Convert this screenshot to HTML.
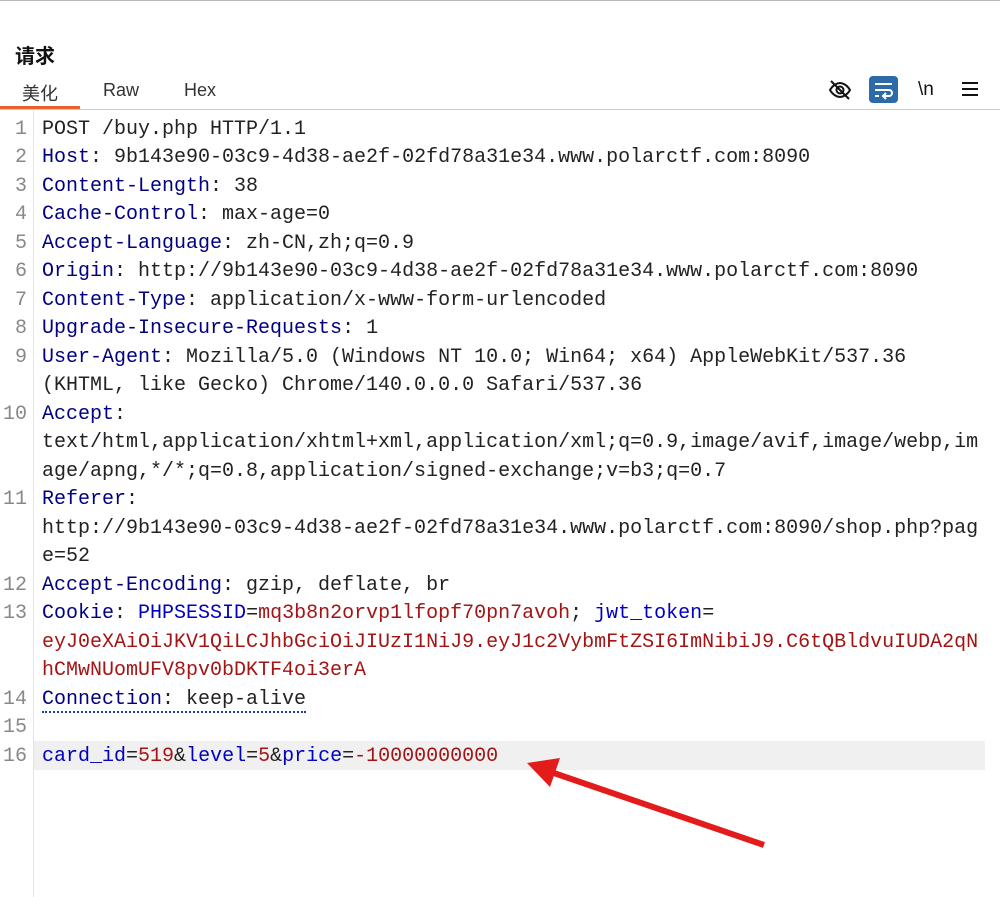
<!DOCTYPE html>
<html><head><meta charset="utf-8">
<style>
html,body{margin:0;padding:0;background:#fff;width:1000px;height:897px;overflow:hidden;position:relative;font-family:"Liberation Sans","Noto Sans CJK SC",sans-serif}
.topline{position:absolute;left:0;top:0;width:1000px;height:1px;background:#bdb6b6}
.title{position:absolute;left:15px;top:40px;font-size:20px;font-weight:bold;color:#111}
.tab{position:absolute;top:80px;font-size:18px;color:#333}
.ul{position:absolute;left:0;top:106px;width:80px;height:3px;background:#e8602c}
.sep{position:absolute;left:0;top:109px;width:1000px;height:1px;background:#ccd0d0}
.gut{position:absolute;left:33px;top:110px;width:1px;height:787px;background:#e4e4e4}
.hl{position:absolute;left:34px;top:741px;width:951px;height:29px;background:#f0f0f0}
.row{position:absolute;left:42px;height:28.5px;line-height:28.5px;font-family:"Liberation Mono","Noto Sans CJK SC",monospace;font-size:20px;color:#222;white-space:pre}
.n{position:absolute;left:0;width:27px;text-align:right;height:28.5px;line-height:28.5px;font-family:"Liberation Mono",monospace;font-size:20px;color:#888}
.k{color:#000080}.b{color:#0000c0}.r{color:#a31515}
.dot{border-bottom:2px dotted #1a3fb5}
</style></head><body>
<div class="topline"></div>
<div class="title">请求</div>
<div class="tab" style="left:22px">美化</div>
<div class="tab" style="left:103px">Raw</div>
<div class="tab" style="left:184px">Hex</div>
<div class="ul"></div><div class="sep"></div><div class="gut"></div><div class="hl"></div>

<svg style="position:absolute;left:828px;top:78px" width="24" height="24" viewBox="0 0 24 24" fill="none" stroke="#111" stroke-width="2"><path d="M2 12c3-5 7-7 10-7s7 2 10 7c-3 5-7 7-10 7s-7-2-10-7z"/><circle cx="12" cy="12" r="3.5"/><path d="M3 3l18 18"/></svg>
<div style="position:absolute;left:869px;top:76px;width:29px;height:27px;border-radius:4px;background:#2d6aa8"></div>
<svg style="position:absolute;left:869px;top:76px" width="29" height="27" viewBox="0 0 29 27" fill="none" stroke="#fff" stroke-width="2"><path d="M6 8h17M6 14h14a3 3 0 0 1 0 6h-5M17 17l-3 3 3 3M6 20h4"/></svg>
<div style="position:absolute;left:918px;top:79px;font-size:19px;color:#111">\n</div>
<svg style="position:absolute;left:962px;top:82px" width="16" height="14" viewBox="0 0 16 14" stroke="#111" stroke-width="2"><path d="M0 1h16M0 7h16M0 13h16"/></svg>

<div id="c"></div>
<script>
var R=[
[1,'POST /buy.php HTTP/1.1'],
[2,'<span class="k">Host</span>: 9b143e90-03c9-4d38-ae2f-02fd78a31e34.www.polarctf.com:8090'],
[3,'<span class="k">Content-Length</span>: 38'],
[4,'<span class="k">Cache-Control</span>: max-age=0'],
[5,'<span class="k">Accept-Language</span>: zh-CN,zh;q=0.9'],
[6,'<span class="k">Origin</span>: http://9b143e90-03c9-4d38-ae2f-02fd78a31e34.www.polarctf.com:8090'],
[7,'<span class="k">Content-Type</span>: application/x-www-form-urlencoded'],
[8,'<span class="k">Upgrade-Insecure-Requests</span>: 1'],
[9,'<span class="k">User-Agent</span>: Mozilla/5.0 (Windows NT 10.0; Win64; x64) AppleWebKit/537.36'],
[0,'(KHTML, like Gecko) Chrome/140.0.0.0 Safari/537.36'],
[10,'<span class="k">Accept</span>:'],
[0,'text/html,application/xhtml+xml,application/xml;q=0.9,image/avif,image/webp,im'],
[0,'age/apng,*/*;q=0.8,application/signed-exchange;v=b3;q=0.7'],
[11,'<span class="k">Referer</span>:'],
[0,'http://9b143e90-03c9-4d38-ae2f-02fd78a31e34.www.polarctf.com:8090/shop.php?pag'],
[0,'e=52'],
[12,'<span class="k">Accept-Encoding</span>: gzip, deflate, br'],
[13,'<span class="k">Cookie</span>: <span class="b">PHPSESSID</span>=<span class="r">mq3b8n2orvp1lfopf70pn7avoh</span>; <span class="b">jwt_token</span>='],
[0,'<span class="r">eyJ0eXAiOiJKV1QiLCJhbGciOiJIUzI1NiJ9.eyJ1c2VybmFtZSI6ImNibiJ9.C6tQBldvuIUDA2qN</span>'],
[0,'<span class="r">hCMwNUomUFV8pv0bDKTF4oi3erA</span>'],
[14,'<span class="dot"><span class="k">Connection</span>: keep-alive</span>'],
[15,''],
[16,'<span class="b">card_id</span>=<span class="r">519</span>&amp;<span class="b">level</span>=<span class="r">5</span>&amp;<span class="b">price</span>=<span class="r">-10000000000</span>']
];
var h='';
for(var i=0;i<R.length;i++){var t=115.5+i*28.5;
if(R[i][0])h+='<div class="n" style="top:'+t+'px">'+R[i][0]+'</div>';
h+='<div class="row" style="top:'+t+'px">'+R[i][1]+'</div>';}
document.getElementById('c').innerHTML=h;
</script>
<svg style="position:absolute;left:0;top:0" width="1000" height="897"><line x1="764" y1="845" x2="548" y2="771" stroke="#e31b1b" stroke-width="6"/><polygon points="527,763 560,758 550,787" fill="#e31b1b"/></svg>
</body></html>
